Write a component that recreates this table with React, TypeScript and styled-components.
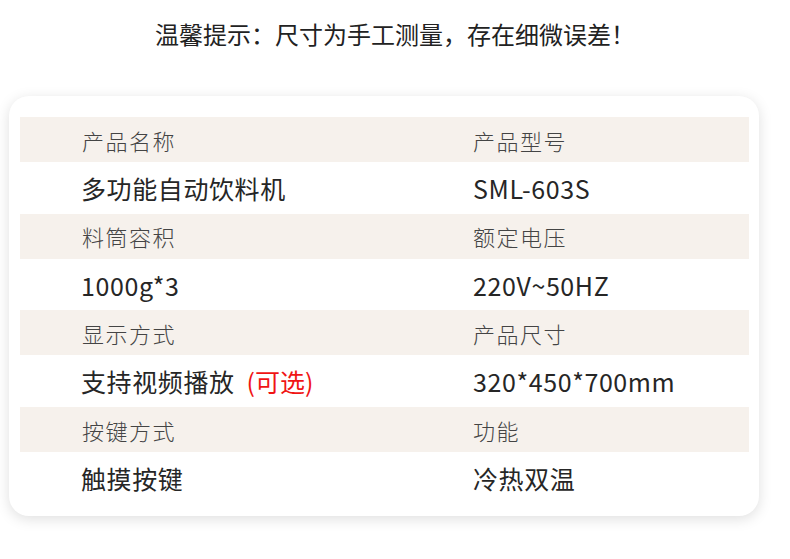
import React from "react";
import styled, { createGlobalStyle } from "styled-components";

const GlobalStyle = createGlobalStyle`
  html, body {
    margin: 0;
    padding: 0;
    background: #fff;
  }
  body {
    font-family: "Noto Sans CJK SC", "Noto Sans", sans-serif;
    width: 790px;
    height: 559px;
    overflow: hidden;
  }
`;

const SPage = styled.div`
  width: 790px;
  height: 559px;
  background: #fff;
`;

const STip = styled.h2`
  margin: 0;
  padding-top: 22px;
  height: 28px;
  text-align: center;
  font-size: 24px;
  line-height: 24px;
  font-weight: 400;
  letter-spacing: 0;
  color: #222;
`;

const SCard = styled.div`
  margin: 46px 0 0 9px;
  width: 750px;
  height: 420px;
  box-sizing: border-box;
  padding: 21px 10px 0 11px;
  background: #fff;
  border-radius: 20px;
  box-shadow: 0 3px 14px rgba(0, 0, 0, 0.13);
`;

const SGrid = styled.div`
  display: grid;
  grid-template-columns: 453px 1fr;
`;

const SCell = styled.div<{ $label: boolean; $right: boolean }>`
  display: flex;
  align-items: center;
  height: ${(p) => (p.$label ? "45px" : "51.7px")};
  padding-left: ${(p) => (p.$right ? "0" : p.$label ? "62px" : "61px")};
  background: ${(p) => (p.$label ? "#f6f1ec" : "#fff")};
  font-size: ${(p) => (p.$label ? "22px" : "25px")};
  font-weight: ${(p) => (p.$label ? 300 : 400)};
  letter-spacing: ${(p) => (p.$label ? "1.5px" : "0.6px")};
  color: ${(p) => (p.$label ? "#444" : "#262626")};
  white-space: nowrap;
`;

const SOptional = styled.span`
  margin-left: 12px;
  color: #f01414;
  font-weight: 400;
  letter-spacing: 0;
`;

type Spec = { label: string; value: React.ReactNode };

const rows: [Spec, Spec][] = [
  [
    { label: "产品名称", value: "多功能自动饮料机" },
    { label: "产品型号", value: "SML-603S" },
  ],
  [
    { label: "料筒容积", value: "1000g*3" },
    { label: "额定电压", value: "220V~50HZ" },
  ],
  [
    {
      label: "显示方式",
      value: (
        <>
          支持视频播放<SOptional>(可选)</SOptional>
        </>
      ),
    },
    { label: "产品尺寸", value: "320*450*700mm" },
  ],
  [
    { label: "按键方式", value: "触摸按键" },
    { label: "功能", value: "冷热双温" },
  ],
];

export default function App() {
  return (
    <SPage>
      <GlobalStyle />
      <STip>温馨提示：尺寸为手工测量，存在细微误差！</STip>
      <SCard>
        <SGrid>
          {rows.map(([left, right]) => (
            <React.Fragment key={left.label}>
              <SCell $label $right={false}>
                {left.label}
              </SCell>
              <SCell $label $right>
                {right.label}
              </SCell>
              <SCell $label={false} $right={false}>
                {left.value}
              </SCell>
              <SCell $label={false} $right>
                {right.value}
              </SCell>
            </React.Fragment>
          ))}
        </SGrid>
      </SCard>
    </SPage>
  );
}
